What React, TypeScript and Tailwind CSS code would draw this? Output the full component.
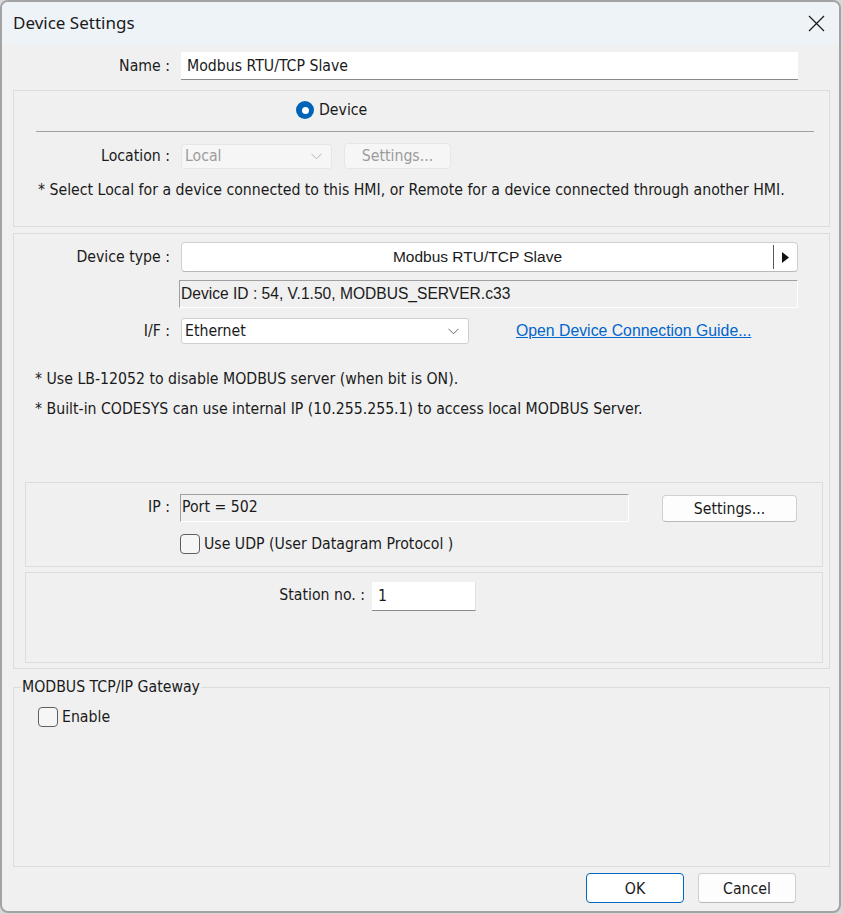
import React from "react";

const body = "font-['DejaVu_Sans',sans-serif] [font-stretch:condensed] text-[15.7px] text-[#1a1a1a]";
const arial = "font-['Liberation_Sans',Arial,sans-serif]";

function Checkbox({ label }: { label: string }) {
  return (
    <div className="flex items-center gap-[4px]">
      <span className="h-[20px] w-[20px] rounded-[4px] border border-[#5f5f5f] bg-[#f6f6f6]" />
      <span>{label}</span>
    </div>
  );
}

function Chevron({ color }: { color: string }) {
  return (
    <svg width="11" height="7" viewBox="0 0 11 7" fill="none">
      <path d="M0.5 0.8 L5.5 5.8 L10.5 0.8" stroke={color} strokeWidth="1" />
    </svg>
  );
}

function Sunken({ children, className }: { children: React.ReactNode; className: string }) {
  return (
    <div
      className={`flex h-[28px] items-center border-t border-l border-r border-b border-t-[#a0a0a0] border-l-[#a0a0a0] border-r-white border-b-white bg-[#f0f0f0] pl-[1px] ${className}`}
    >
      {children}
    </div>
  );
}

export default function App() {
  return (
    <div className="h-[914px] w-[843px] bg-[#d8d8d8]">
      <div className={`flex h-[913px] w-[841px] flex-col overflow-hidden rounded-[8px] border-2 border-[#a3a3a3] bg-[#f0f0f0] ${body}`}>
        {/* title bar */}
        <div className="flex h-[43px] shrink-0 items-center justify-between bg-[#eef3f8] pl-[11px] pr-[14px]">
          <span className="mb-[2px] font-['Noto_Sans',sans-serif] text-[17px] text-[#1a1a1a] [font-stretch:normal]">Device Settings</span>
          <svg width="17" height="17" viewBox="0 0 17 17" className="mb-[1px]">
            <path d="M1 1 L16 16 M16 1 L1 16" stroke="#1a1a1a" strokeWidth="1.2" />
          </svg>
        </div>

        {/* name */}
        <div className="mt-[7px] flex h-[28px] items-center">
          <span className="w-[168px] text-right">Name :</span>
          <div className="ml-[11px] flex h-[28px] w-[617px] items-center border-b border-[#8a8a8a] bg-white pl-[6px]">
            Modbus RTU/TCP Slave
          </div>
        </div>

        {/* device / location group */}
        <div className="ml-[11px] mt-[10px] h-[137px] w-[817px] shrink-0 border border-[#dcdcdc]">
          <div className="ml-[282px] mt-[10px] flex h-[18px] items-center gap-[5px]">
            <span className="flex h-[18px] w-[18px] items-center justify-center rounded-full bg-[#0063b8]">
              <span className="h-[7px] w-[7px] rounded-full bg-white" />
            </span>
            <span>Device</span>
          </div>
          <div className="ml-[22px] mt-[12px] h-px w-[778px] bg-[#a0a0a0]" />
          <div className="mt-[11px] flex h-[26px] items-center">
            <span className="w-[156px] text-right">Location :</span>
            <div className="ml-[11px] flex h-[25px] w-[151px] items-center justify-between rounded-[3px] border border-[#e6e6e6] bg-[#f6f6f6] pl-[3px] pr-[9px] text-[#9c9c9c]">
              <span>Local</span>
              <Chevron color="#b5b5b5" />
            </div>
            <div className="ml-[12px] flex h-[26px] w-[107px] items-center justify-center rounded-[4px] border border-[#e6e6e6] bg-[#f6f6f6] text-[#9c9c9c]">
              Settings...
            </div>
          </div>
          <p className="ml-[24px] mt-[11px] leading-[20px]">
            * Select Local for a device connected to this HMI, or Remote for a device connected through another HMI.
          </p>
        </div>

        {/* device type group */}
        <div className="ml-[11px] mt-[6px] h-[436px] w-[817px] shrink-0 border border-[#dcdcdc]">
          <div className="mt-[8px] flex h-[30px] items-center">
            <span className="w-[156px] text-right">Device type :</span>
            <div className={`ml-[11px] flex h-[30px] w-[617px] items-center rounded-[4px] border border-[#d0d0d0] border-b-[#b8b8b8] bg-white ${arial} text-[15.5px] [font-stretch:normal]`}>
              <span className="flex-1 text-center">Modbus RTU/TCP Slave</span>
              <span className="h-[24px] w-px bg-[#555]" />
              <span className="flex w-[23px] justify-center">
                <svg width="7" height="11" viewBox="0 0 7 11">
                  <path d="M0 0 L7 5.5 L0 11 Z" fill="#111" />
                </svg>
              </span>
            </div>
          </div>
          <div className="mt-[8px] pl-[165px]">
            <Sunken className={`w-[619px] ${arial} text-[15.6px] [font-stretch:normal]`}>
              Device ID : 54, V.1.50, MODBUS_SERVER.c33
            </Sunken>
          </div>
          <div className="mt-[10px] flex h-[26px] items-center">
            <span className="w-[156px] text-right">I/F :</span>
            <div className="ml-[11px] flex h-[26px] w-[288px] items-center justify-between rounded-[3px] border border-[#cfcfcf] bg-white pl-[3px] pr-[9px]">
              <span>Ethernet</span>
              <Chevron color="#666" />
            </div>
            <a className={`ml-[47px] ${arial} text-[15.8px] text-[#0066cc] underline [font-stretch:normal]`}>
              Open Device Connection Guide...
            </a>
          </div>
          <p className="ml-[21px] mt-[25px] leading-[20px]">* Use LB-12052 to disable MODBUS server (when bit is ON).</p>
          <p className="ml-[21px] mt-[10px] leading-[20px]">
            * Built-in CODESYS can use internal IP (10.255.255.1) to access local MODBUS Server.
          </p>

          {/* IP group */}
          <div className="ml-[11px] mt-[63px] h-[85px] w-[798px] border border-[#dcdcdc]">
            <div className="mt-[11px] flex items-start">
              <span className="w-[144px] pt-[1px] text-right">IP :</span>
              <Sunken className="ml-[10px] w-[449px] pb-[2px]">Port = 502</Sunken>
              <div className="ml-[33px] mt-[1px] flex h-[27px] w-[135px] items-center justify-center rounded-[4px] border border-[#d0d0d0] border-b-[#b8b8b8] bg-[#fdfdfd]">
                Settings...
              </div>
            </div>
            <div className="mt-[10px] pl-[154px]">
              <Checkbox label="Use UDP (User Datagram Protocol )" />
            </div>
          </div>

          {/* station group */}
          <div className="ml-[11px] mt-[5px] h-[91px] w-[798px] border border-[#dcdcdc]">
            <div className="mt-[9px] flex h-[29px] items-center">
              <span className="mb-[3px] w-[339px] text-right">Station no. :</span>
              <div className="ml-[7px] flex h-[29px] w-[104px] items-center border-b border-r border-[#8a8a8a] border-r-[#e0e0e0] bg-white pl-[6px]">
                1
              </div>
            </div>
          </div>
        </div>

        {/* gateway */}
        <fieldset className="ml-[11px] mt-[8px] h-[190px] w-[817px] shrink-0 border border-[#dcdcdc] px-[7px]">
          <legend className="px-[1px] leading-[20px]">MODBUS TCP/IP Gateway</legend>
          <div className="ml-[17px] mt-[8px]">
            <Checkbox label="Enable" />
          </div>
        </fieldset>

        {/* buttons */}
        <div className="mr-[43px] mt-[6px] flex justify-end gap-[14px]">
          <div className="flex h-[30px] w-[98px] items-center justify-center rounded-[4px] border border-[#0067c0] bg-white pt-[2px]">
            OK
          </div>
          <div className="flex h-[30px] w-[98px] items-center justify-center rounded-[4px] border border-[#d0d0d0] border-b-[#b8b8b8] bg-[#fdfdfd] pt-[2px]">
            Cancel
          </div>
        </div>
      </div>
    </div>
  );
}
